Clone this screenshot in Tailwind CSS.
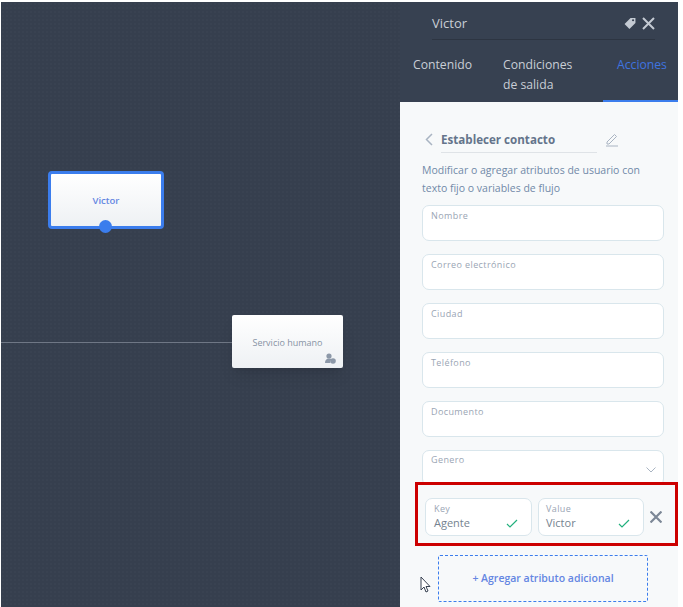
<!DOCTYPE html>
<html lang="es">
<head>
  <meta charset="UTF-8" />
  <title>Establecer contacto</title>
  <script src="https://cdn.jsdelivr.net/npm/@tailwindcss/browser@4"></script>
</head>
<body class="bg-white">
  <div class="w-[683px] h-[607px] overflow-hidden pt-[2px] pr-[5px] pl-px flex font-['Open_Sans','Noto_Sans',sans-serif]">

    <!-- canvas -->
    <div class="relative w-[399px] h-[605px] shrink-0 bg-[#363f4e] bg-[radial-gradient(#394251_1px,transparent_1px)] bg-[size:4px_4px]">
      <div class="absolute left-[47px] top-[169px] w-[116px] h-[58px] rounded-[4px] border-[3px] border-[#3b7ded] bg-gradient-to-b from-white to-[#eef1f4] flex items-center justify-center text-[9.500px] font-semibold text-[#6486e2]">
        <span class="mt-[2px]">Victor</span>
        <span class="absolute left-[48px] top-[46px] w-[13px] h-[13px] rounded-full bg-[#3b7ded]"></span>
      </div>
      <div class="absolute left-0 top-[340px] w-[232px] h-px bg-[#6f7785]"></div>
      <div class="absolute left-[231px] top-[313px] w-[111px] h-[53px] rounded-[2px] bg-gradient-to-b from-white to-[#eef1f4] shadow-lg flex items-center justify-center text-[9px] text-[#8793a4]">
        <span class="mt-[3px]">Servicio humano</span>
        <svg class="absolute right-[7px] bottom-[4px]" width="11" height="11" viewBox="0 0 11 11" fill="#8c98a8">
          <circle cx="4" cy="3" r="2.600"/>
          <path d="M0 10c0-3 1.500-4.500 4-4.500 1.200 0 2 .3 2.700.9A3 3 0 0 0 5.300 10z"/>
          <circle cx="8" cy="8" r="2.800"/>
        </svg>
      </div>
    </div>

    <!-- panel -->
    <div class="w-[278px] h-[605px] shrink-0 flex flex-col bg-[#f7f9fa]">
      <div class="bg-[#374151] h-[100px] shrink-0 relative">
        <div class="ml-[32px] mr-[23px] h-[38px] border-b border-[#2d3542] flex items-center justify-between pt-[5px]">
          <span class="text-[13px] text-[#c9ced6] mt-[2px]">Victor</span>
          <div class="flex items-center gap-[6px]">
            <svg width="12" height="12" viewBox="0 0 11 11" fill="#c4cad3"><path d="M0.500 6.500 6 1h4.500v4.500L5 11z"/><circle cx="8.300" cy="3" r="1" fill="#374151"/></svg>
            <svg width="13" height="13" viewBox="0 0 13 13" stroke="#c4cad3" stroke-width="2" fill="none"><path d="M1 1l11 11M12 1 1 12"/></svg>
          </div>
        </div>
        <div class="flex text-[12.200px] leading-[20px] pt-[15px] text-[#c9ced6]">
          <span class="ml-[13px] w-[90px]">Contenido</span>
          <span class="w-[114px]">Condiciones<br>de salida</span>
          <span class="text-[#3f74e0]">Acciones</span>
        </div>
        <div class="absolute right-0 bottom-0 w-[75px] h-[2px] bg-[#3b7ded]"></div>
      </div>

      <div class="flex flex-col">
        <div class="ml-[25px] mt-[26px] flex items-start">
          <svg class="mt-[5px]" width="8" height="13" viewBox="0 0 8 13" fill="none" stroke="#a9b4c2" stroke-width="1.500"><path d="M7 1 1.500 6.500 7 12"/></svg>
          <div class="ml-[8px] w-[156px] h-[25px] border-b border-[#dfe3e7] pt-[3px] text-[11.600px] font-bold text-[#64748b]">Establecer contacto</div>
          <svg class="ml-[8px] mt-[4px]" width="14" height="15" viewBox="0 0 14 15" fill="none" stroke="#a9b4c2"><path d="M2 10 9.500 2.500l2 2L4 12H2zM1 14h12"/></svg>
        </div>
        <p class="ml-[22px] mt-[8px] text-[10.500px] leading-[18px] text-[#7189a8]">Modificar o agregar atributos de usuario con<br>texto fijo o variables de flujo</p>

        <div class="ml-[22px] w-[242px] mt-[8px] flex flex-col gap-[13px]">
          <div class="h-[36px] rounded-[7px] border border-[#d9e6ec] bg-white px-[8px] pt-[3px] text-[9px] tracking-[0.4px] text-[#9aa5b4]">Nombre</div>
          <div class="h-[36px] rounded-[7px] border border-[#d9e6ec] bg-white px-[8px] pt-[3px] text-[9px] tracking-[0.4px] text-[#9aa5b4]">Correo electrónico</div>
          <div class="h-[36px] rounded-[7px] border border-[#d9e6ec] bg-white px-[8px] pt-[3px] text-[9px] tracking-[0.4px] text-[#9aa5b4]">Ciudad</div>
          <div class="h-[36px] rounded-[7px] border border-[#d9e6ec] bg-white px-[8px] pt-[3px] text-[9px] tracking-[0.4px] text-[#9aa5b4]">Teléfono</div>
          <div class="h-[36px] rounded-[7px] border border-[#d9e6ec] bg-white px-[8px] pt-[3px] text-[9px] tracking-[0.4px] text-[#9aa5b4]">Documento</div>
          <div class="relative h-[36px] rounded-[7px] border border-[#d9e6ec] bg-white px-[8px] pt-[2px] text-[9px] tracking-[0.4px] text-[#9aa5b4]">
            Genero
            <svg class="absolute right-[7px] top-[16px]" width="10" height="6" viewBox="0 0 10 6" fill="none" stroke="#a9b4c2"><path d="M.5.5 5 5 9.500.5"/></svg>
          </div>
        </div>

        <div class="relative ml-[15px] -mt-[4px] h-[64px] border-[3px] border-[#cc0000] bg-[#f7f9fa] flex items-center pl-[7px] pt-[5px]">
          <div class="relative w-[107px] h-[38px] rounded-[7px] border border-[#d9e6ec] bg-white px-[8px] pt-[4px]">
            <div class="text-[9px] leading-[12px] tracking-[0.4px] text-[#9aa5b4]">Key</div>
            <div class="text-[11px] leading-[16px] text-[#75838f]">Agente</div>
            <svg class="absolute right-[13px] bottom-[7px]" width="12" height="9" viewBox="0 0 12 9" fill="none" stroke="#22b07d" stroke-width="1.200"><path d="M1 5l3 3 7-7"/></svg>
          </div>
          <div class="relative ml-[6px] w-[106px] h-[38px] rounded-[7px] border border-[#d9e6ec] bg-white px-[7px] pt-[4px]">
            <div class="text-[9px] leading-[12px] tracking-[0.4px] text-[#9aa5b4]">Value</div>
            <div class="text-[11px] leading-[16px] text-[#75838f]">Victor</div>
            <svg class="absolute right-[13px] bottom-[7px]" width="12" height="9" viewBox="0 0 12 9" fill="none" stroke="#22b07d" stroke-width="1.200"><path d="M1 5l3 3 7-7"/></svg>
          </div>
          <svg class="ml-[6px]" width="12" height="12" viewBox="0 0 11 11" fill="none" stroke="#7c8796" stroke-width="2"><path d="M.500.500l10 10M10.500.500l-10 10"/></svg>
        </div>

        <div class="relative ml-[38px] mt-[9px] w-[210px] h-[47px] rounded-[2px] border border-dashed border-[#3b7ded] flex items-center justify-center text-[10.500px] font-semibold text-[#6486e2]">
          + Agregar atributo adicional
          <svg class="absolute -left-[19px] top-[20px]" width="11" height="18" viewBox="0 0 11 18" fill="white" stroke="#374151"><path d="M1 1v13l3-3 2 5 2-1-2-4.500h4z"/></svg>
        </div>
      </div>
    </div>
  </div>
</body>
</html>
